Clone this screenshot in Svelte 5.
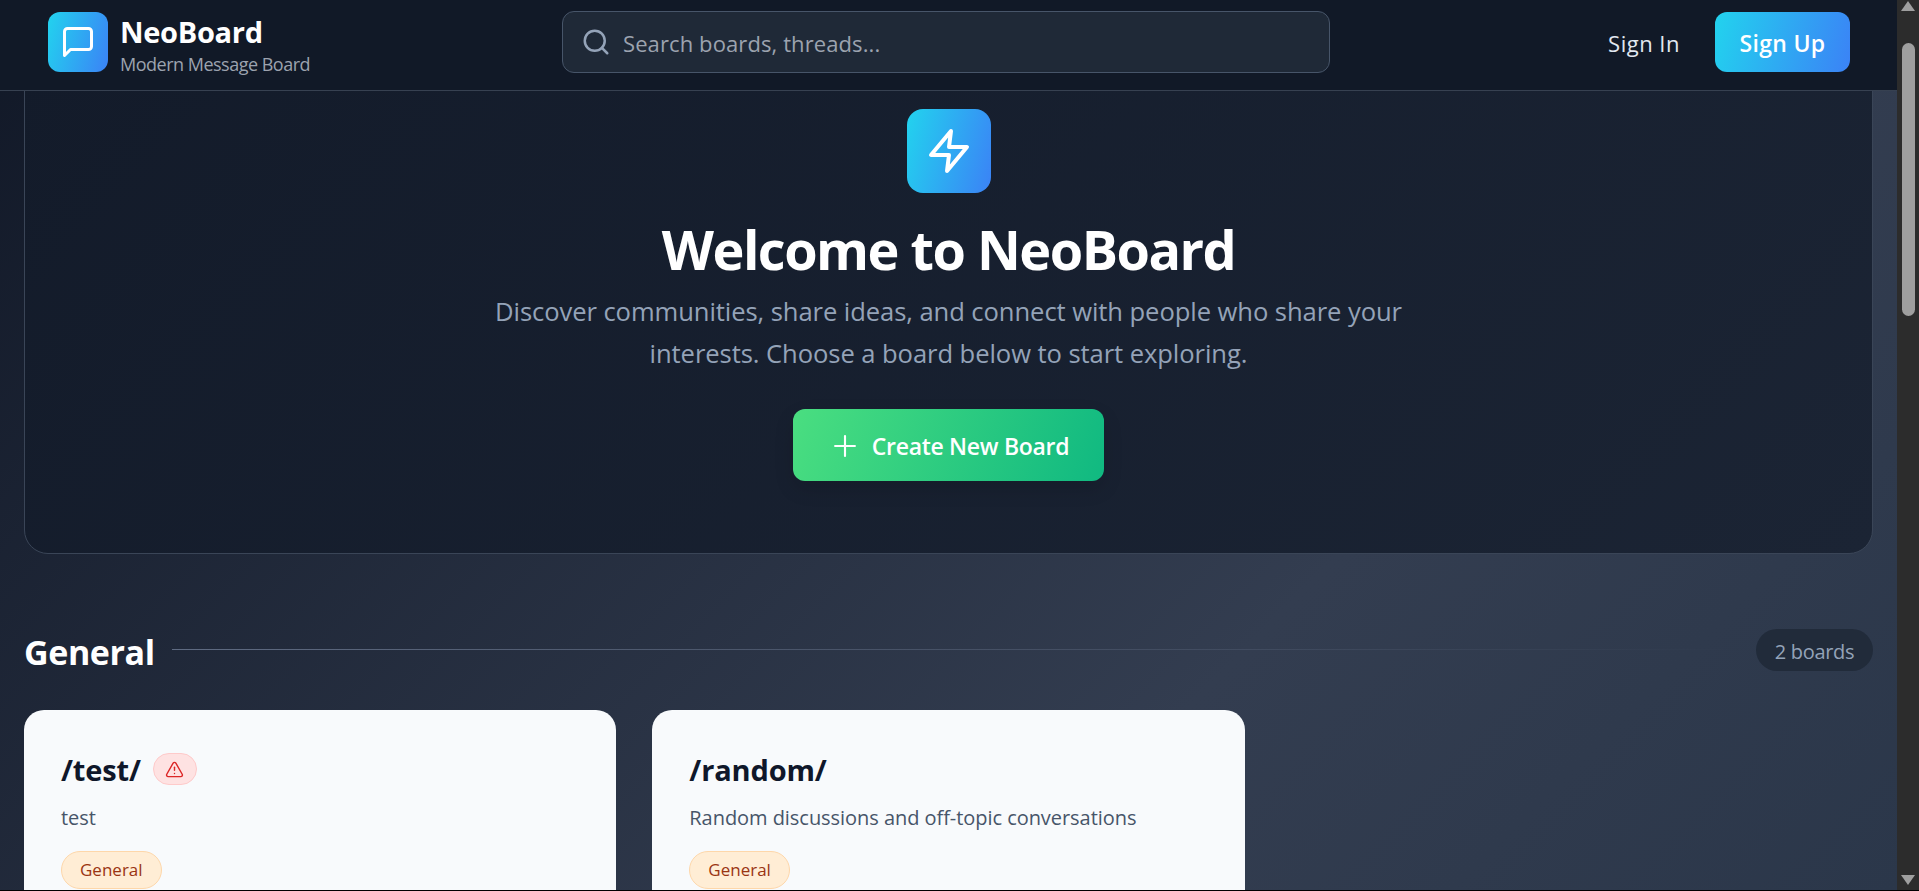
<script>
	const boards = [
		{ name: '/test/', desc: 'test', tag: 'General', warn: true },
		{ name: '/random/', desc: 'Random discussions and off-topic conversations', tag: 'General', warn: false }
	];
</script>

<div class="window">
	<div class="page">
		<header>
			<div class="brand">
				<div class="logo">
					<svg width="36" height="36" viewBox="0 0 24 24" fill="none" stroke="#fff" stroke-width="2" stroke-linecap="round" stroke-linejoin="round">
						<path d="M21 15a2 2 0 0 1-2 2H7l-4 4V5a2 2 0 0 1 2-2h14a2 2 0 0 1 2 2z" />
					</svg>
				</div>
				<div class="brand-text">
					<div class="brand-name">NeoBoard</div>
					<div class="brand-sub">Modern Message Board</div>
				</div>
			</div>
			<div class="search">
				<svg width="30" height="30" viewBox="0 0 24 24" fill="none" stroke="#94a3b8" stroke-width="2" stroke-linecap="round" stroke-linejoin="round">
					<circle cx="11" cy="11" r="8" />
					<path d="m21 21-4.3-4.3" />
				</svg>
				<span>Search boards, threads...</span>
			</div>
			<div class="auth">
				<span class="signin">Sign In</span>
				<span class="signup">Sign Up</span>
			</div>
		</header>

		<main>
			<section class="hero">
				<div class="hero-icon">
					<svg width="48" height="48" viewBox="0 0 24 24" fill="none" stroke="#fff" stroke-width="2" stroke-linecap="round" stroke-linejoin="round">
						<path d="M13 2 3 14h9l-1 8 10-12h-9l1-8z" />
					</svg>
				</div>
				<h1>Welcome to NeoBoard</h1>
				<p>Discover communities, share ideas, and connect with people who share your<br />interests. Choose a board below to start exploring.</p>
				<div class="create">
					<svg width="34" height="34" viewBox="0 0 24 24" fill="none" stroke="#fff" stroke-width="1.5" stroke-linecap="round" stroke-linejoin="round">
						<path d="M5 12h14" />
						<path d="M12 5v14" />
					</svg>
					<span>Create New Board</span>
				</div>
			</section>

			<div class="cat-head">
				<h2>General</h2>
				<div class="rule"></div>
				<span class="count">2 boards</span>
			</div>

			<div class="grid">
				{#each boards as b}
					<article class="card">
						<div class="card-title">
							<h3>{b.name}</h3>
							{#if b.warn}
								<span class="warn">
									<svg width="19" height="19" viewBox="0 0 24 24" fill="none" stroke="#dc2626" stroke-width="1.8" stroke-linecap="round" stroke-linejoin="round">
										<path d="m21.73 18-8-14a2 2 0 0 0-3.48 0l-8 14A2 2 0 0 0 4 21h16a2 2 0 0 0 1.73-3Z" />
										<path d="M12 9v4" />
										<path d="M12 17h.01" />
									</svg>
								</span>
							{/if}
						</div>
						<div class="card-desc">{b.desc}</div>
						<span class="tag">{b.tag}</span>
					</article>
				{/each}
			</div>
		</main>
	</div>

	<div class="scrollbar">
		<div class="arrow up"></div>
		<div class="thumb"></div>
		<div class="arrow down"></div>
	</div>
</div>

<style>
	:global(body) {
		margin: 0;
		background: #000;
	}
	.window {
		display: flex;
		width: 1919px;
		height: 890px;
		overflow: hidden;
		font-family: 'Open Sans', 'Noto Sans', sans-serif;
	}
	.page {
		flex: 1;
		min-width: 0;
		display: flex;
		flex-direction: column;
		background: linear-gradient(135deg, #111827 0%, #333d50 68%, #2b374a 100%);
		overflow: hidden;
	}
	header {
		flex: none;
		height: 91px;
		box-sizing: border-box;
		display: flex;
		align-items: center;
		padding: 0 47px 6px 48px;
		background: #111927;
		border-bottom: 1px solid #374151;
		position: relative;
		z-index: 2;
	}
	.brand {
		flex: none;
		display: flex;
		align-items: center;
		gap: 12px;
		width: 514px;
	}
	.logo {
		width: 60px;
		height: 60px;
		border-radius: 12px;
		background: linear-gradient(105deg, #22d3ee, #3b82f6);
		display: flex;
		align-items: center;
		justify-content: center;
	}
	.brand-text {
		padding-top: 6px;
	}
	.brand-name {
		color: #fff;
		font-size: 29px;
		font-weight: 700;
		line-height: 34px;
		letter-spacing: -0.3px;
	}
	.brand-sub {
		margin-top: 3px;
		color: #9ca3af;
		font-size: 18px;
		line-height: 24px;
		letter-spacing: -0.5px;
	}
	.search {
		flex: none;
		width: 768px;
		height: 62px;
		box-sizing: border-box;
		display: flex;
		align-items: center;
		gap: 12px;
		padding-left: 18px;
		background: #1f2937;
		border: 1px solid #475569;
		border-radius: 12px;
		color: #9ca3af;
		font-size: 22px;
		letter-spacing: 0.1px;
	}
	.search span {
		padding-top: 2px;
	}
	.auth {
		margin-left: auto;
		display: flex;
		align-items: center;
		gap: 35px;
	}
	.signin {
		padding-top: 2px;
		color: #e2e8f0;
		font-size: 22px;
		letter-spacing: 0.5px;
	}
	.signup {
		width: 135px;
		height: 60px;
		padding-top: 2px;
		box-sizing: border-box;
		border-radius: 12px;
		background: linear-gradient(105deg, #22d3ee, #3b82f6);
		color: #fff;
		font-size: 23px;
		font-weight: 600;
		letter-spacing: 0.3px;
		display: flex;
		align-items: center;
		justify-content: center;
	}
	main {
		flex: 1;
		padding: 0 24px;
	}
	.hero {
		margin-top: -40px;
		padding: 57px 0 72px;
		height: 503px;
		box-sizing: border-box;
		border: 1px solid #3a4557;
		border-radius: 24px;
		background: linear-gradient(135deg, #131b2a, #1b2434);
		display: flex;
		flex-direction: column;
		align-items: center;
		text-align: center;
	}
	.hero-icon {
		width: 84px;
		height: 84px;
		border-radius: 16px;
		background: linear-gradient(105deg, #22d3ee, #3b82f6);
		display: flex;
		align-items: center;
		justify-content: center;
	}
	h1 {
		margin: 23px 0 0;
		color: #fff;
		font-size: 54px;
		line-height: 66px;
		font-weight: 700;
		letter-spacing: -1.5px;
	}
	p {
		margin: 9px 0 0;
		color: #94a3b8;
		font-size: 25.6px;
		line-height: 42px;
		letter-spacing: -0.08px;
	}
	.create {
		margin-top: 34px;
		width: 311px;
		height: 72px;
		padding-top: 1px;
		box-sizing: border-box;
		border-radius: 12px;
		background: linear-gradient(110deg, #4ade80, #10b981);
		color: #fff;
		font-size: 23px;
		font-weight: 600;
		letter-spacing: -0.3px;
		display: flex;
		align-items: center;
		justify-content: center;
		gap: 10px;
		box-shadow: 0 8px 20px rgba(0, 0, 0, 0.12);
	}
	.cat-head {
		margin-top: 76px;
		height: 42px;
		display: flex;
		align-items: center;
		gap: 17px;
	}
	h2 {
		margin: 2px 0 0;
		color: #fff;
		font-size: 34px;
		line-height: 42px;
		font-weight: 700;
		letter-spacing: -0.4px;
	}
	.rule {
		flex: 1;
		height: 1px;
		margin-top: -4px;
		background: linear-gradient(90deg, #5f6b82, transparent);
	}
	.count {
		width: 117px;
		height: 42px;
		margin-bottom: 2px;
		padding-top: 2px;
		box-sizing: border-box;
		border-radius: 21px;
		background: #212b3a;
		color: #94a3b8;
		font-size: 20px;
		letter-spacing: -0.3px;
		display: flex;
		align-items: center;
		justify-content: center;
	}
	.grid {
		margin-top: 38px;
		display: grid;
		grid-template-columns: repeat(3, 1fr);
		gap: 36px;
	}
	.card {
		height: 400px;
		box-sizing: border-box;
		padding: 35px 37px;
		border-radius: 20px;
		background: #f8fafc;
	}
	.card-title {
		display: flex;
		align-items: center;
		gap: 12px;
		height: 48px;
	}
	h3 {
		margin: 0;
		color: #0f172a;
		font-size: 29px;
		font-weight: 700;
		letter-spacing: -0.15px;
	}
	.warn {
		width: 44px;
		height: 32px;
		box-sizing: border-box;
		border-radius: 16px;
		background: #fee2e2;
		border: 1px solid #fecaca;
		display: flex;
		align-items: center;
		justify-content: center;
	}
	.card-desc {
		margin-top: 11px;
		color: #475569;
		font-size: 20px;
		line-height: 28px;
		letter-spacing: -0.05px;
	}
	.tag {
		display: inline-block;
		margin-top: 19px;
		padding: 0 18px;
		height: 38px;
		line-height: 36px;
		box-sizing: border-box;
		border-radius: 19px;
		background: #ffedd5;
		border: 1px solid #fed7aa;
		color: #9a3412;
		font-size: 17px;
		font-weight: 500;
		letter-spacing: 0;
	}
	.scrollbar {
		flex: none;
		width: 22px;
		position: relative;
		display: flex;
		flex-direction: column;
		align-items: center;
		background: #2c2c2c;
	}
	.arrow {
		width: 0;
		height: 0;
		border-left: 7px solid transparent;
		border-right: 7px solid transparent;
	}
	.arrow.up {
		margin-top: 1px;
		border-bottom: 10px solid #9f9f9f;
	}
	.arrow.down {
		margin-top: auto;
		margin-bottom: 5px;
		border-top: 10px solid #9f9f9f;
	}
	.thumb {
		position: absolute;
		top: 43px;
		left: 5px;
		width: 13px;
		height: 273px;
		border-radius: 7px;
		background: #9f9f9f;
	}
</style>
